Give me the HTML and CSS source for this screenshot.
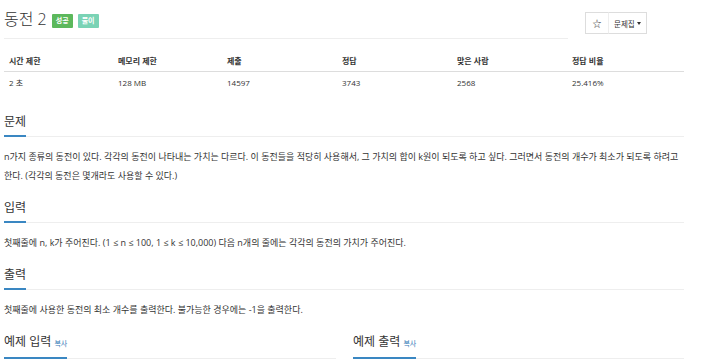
FILE: index.html
```html
<!DOCTYPE html>
<html lang="ko">
<head>
    <meta charset="UTF-8">
    <meta name="viewport" content="width=device-width, initial-scale=1.0">
    <title>동전 2</title>
    <link rel="stylesheet" href="styles.css">
</head>
<body>
    <div class="container">
        <div class="page-top">
            <div class="page-header">
                <h1>동전 2</h1>
                <span class="label label-success">성공</span>
                <span class="label label-info">풀이</span>
            </div>
            <div class="btn-group">
                <span class="btn btn-star">☆</span>
                <span class="btn">문제집 <span class="caret"></span></span>
            </div>
        </div>

        <table class="info-table">
            <thead>
                <tr>
                    <th class="col-a">시간 제한</th>
                    <th class="col-a">메모리 제한</th>
                    <th class="col-b">제출</th>
                    <th class="col-b">정답</th>
                    <th class="col-b">맞은 사람</th>
                    <th>정답 비율</th>
                </tr>
            </thead>
            <tbody>
                <tr>
                    <td>2 초</td>
                    <td>128 MB</td>
                    <td>14597</td>
                    <td>3743</td>
                    <td>2568</td>
                    <td>25.416%</td>
                </tr>
            </tbody>
        </table>

        <section class="headline">
            <h2><span>문제</span></h2>
            <p>n가지 종류의 동전이 있다. 각각의 동전이 나타내는 가치는 다르다. 이 동전들을 적당히 사용해서, 그 가치의 합이 k원이 되도록 하고 싶다. 그러면서 동전의 개수가 최소가 되도록 하려고 한다. (각각의 동전은 몇개라도 사용할 수 있다.)</p>
        </section>

        <section class="headline">
            <h2><span>입력</span></h2>
            <p>첫째줄에 n, k가 주어진다. (1 ≤ n ≤ 100, 1 ≤ k ≤ 10,000) 다음 n개의 줄에는 각각의 동전의 가치가 주어진다.</p>
        </section>

        <section class="headline">
            <h2><span>출력</span></h2>
            <p>첫째줄에 사용한 동전의 최소 개수를 출력한다. 불가능한 경우에는 -1을 출력한다.</p>
        </section>

        <div class="samples">
            <section class="headline">
                <h2><span>예제 입력 <a class="copy" href="#">복사</a></span></h2>
            </section>
            <section class="headline">
                <h2><span>예제 출력 <a class="copy" href="#">복사</a></span></h2>
            </section>
        </div>
    </div>
</body>
</html>
```

FILE: styles.css
```css
body {
    margin: 0;
    font-family: "Open Sans", "Noto Sans CJK KR", sans-serif;
    font-size: 9px;
    color: #333;
    background: #fff;
}
.container {
    width: 680px;
    padding: 0 4px;
}
.page-top {
    display: flex;
    align-items: flex-start;
}
.page-header {
    width: 564px;
    height: 38px;
    border-bottom: 1px solid #eee;
    display: flex;
    align-items: center;
    gap: 5px;
}
.page-header h1 {
    margin: 0;
    font-size: 16px;
    font-weight: 300;
    line-height: 24px;
}
.label {
    display: inline-block;
    padding: 0 4px;
    height: 14px;
    line-height: 14px;
    font-size: 7px;
    font-weight: bold;
    color: #fff;
    border-radius: 1px;
    margin-top: 4px;
}
.label-success {
    background: #5cb85c;
}
.label-info {
    background: #7ad3b5;
}
.btn-group {
    display: flex;
    margin: 12px 0 0 17px;
}
.btn {
    display: inline-flex;
    align-items: center;
    height: 20px;
    padding: 0 5px;
    border: 1px solid #ddd;
    font-size: 7.5px;
    color: #333;
    background: #fff;
}
.btn + .btn {
    border-left: 1px solid #eee;
}
.btn-star {
    width: 12px;
    justify-content: center;
    font-size: 9px;
    border-right: none;
}
.caret {
    display: inline-block;
    margin-left: 2px;
    border-top: 3px solid #333;
    border-left: 2.5px solid transparent;
    border-right: 2.5px solid transparent;
}
.info-table {
    width: 100%;
    margin-top: 11px;
    border-collapse: collapse;
    table-layout: fixed;
    font-size: 8px;
}
.info-table .col-a {
    width: 99px;
}
.info-table .col-b {
    width: 105px;
}
.info-table th,
.info-table td {
    text-align: left;
    padding: 0 5px;
    height: 21px;
}
.info-table th {
    font-weight: 600;
    border-bottom: 1px solid #ddd;
}
.headline {
    margin-top: 13px;
}
.info-table + .headline {
    margin-top: 19px;
}
.headline h2 {
    margin: 0;
    font-size: 12px;
    font-weight: 400;
    line-height: 20px;
    border-bottom: 1px solid #eee;
}
.headline h2 span {
    display: inline-block;
    padding-bottom: 3px;
    margin-bottom: -1px;
    border-bottom: 2px solid #3a87c2;
}
.headline p {
    margin: 10px 0 0;
    line-height: 19px;
    word-break: keep-all;
}
.copy {
    font-size: 7px;
    color: #337ab7;
    text-decoration: none;
}
.samples {
    display: grid;
    grid-template-columns: 332px 331px;
    gap: 17px;
}
```
